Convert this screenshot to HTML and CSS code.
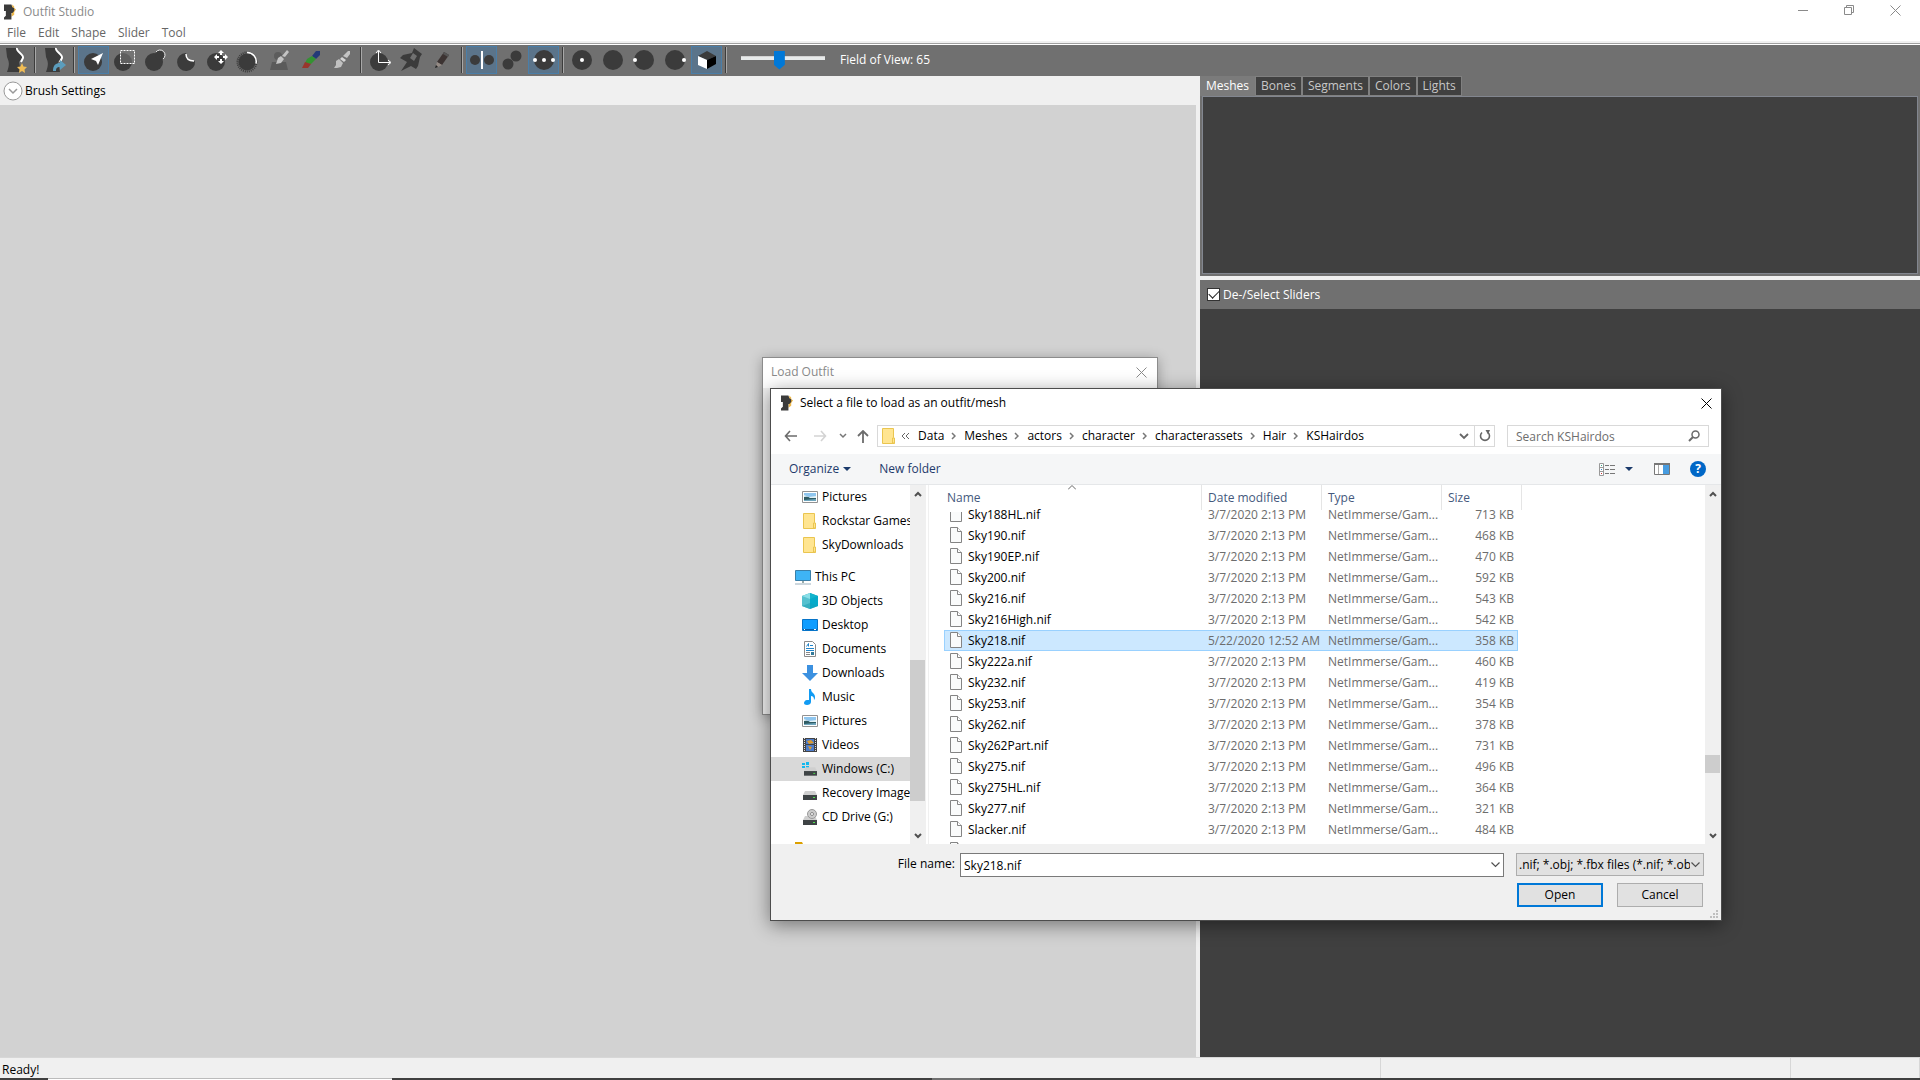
FILE: index.html
```html
<!DOCTYPE html>
<html lang="en">
<head>
<meta charset="utf-8">
<title>Outfit Studio</title>
<link rel="stylesheet" href="styles.css">
</head>
<body>
<svg class="defs" aria-hidden="true">
  <symbol id="app" viewBox="0 0 14 16"><path d="M9 0l2 2v2l2 1-2 3v3l-3 2z" fill="#efb94b"/><path d="M0 0h8l1 3 2 1v3L9 9H8v7H0v-2l2-2V7H0z" fill="#3b3b3b"/></symbol>
  <symbol id="torso" viewBox="0 0 22 26"><path d="M1 1h12c-1 4 5 6 4 10l-3 4 2 10H2c3-8 2-10 0-15z" fill="#3b3b3b"/><path d="M12 1c-1 4 7 6 6 10l-2 4" fill="none" stroke="#fff" stroke-width="2"/></symbol>
  <symbol id="ball" viewBox="0 0 20 20"><circle cx="10" cy="10" r="10" fill="#3b3b3b"/></symbol>
  <symbol id="page" viewBox="0 0 12 16"><path d="M.5 .5h7l4 4v11H.5z" fill="#fafbfb" stroke="#848484"/><path d="M7.500 .5v4h4" fill="#fff" stroke="#848484"/></symbol>
  <symbol id="page-end" viewBox="0 6 12 10"><path d="M.5 .5h11v15H.5z" fill="#fafbfb" stroke="#848484"/></symbol>
  <symbol id="folder" viewBox="0 0 14 16"><path d="M.5 .5h11v9l1 1v5H.5z" fill="#ffe591" stroke="#eac54f"/><path d="M10.500 15v-5h2v5z" fill="#ffe591" stroke="#eac54f"/></symbol>
  <symbol id="picture" viewBox="0 0 16 12"><path d="M.5 .5h15v11H.5z" fill="#fff" stroke="#929292"/><path d="M2 2h12v8H2z" fill="#8fc6ef"/><path d="M2 4l5 2 7-1v3H2z" fill="#e2f1f6"/><path d="M2 6q4-1 6 1l6 0v3H2z" fill="#2f5c64"/><path d="M2 9l12-1v2H2z" fill="#6fa7be"/></symbol>
  <symbol id="chev-up" viewBox="0 0 8 6"><path d="M1 5l3-3 3 3" fill="none" stroke="#505050" stroke-width="2"/></symbol>
  <symbol id="chev-down" viewBox="0 0 8 6"><path d="M1 1l3 3 3-3" fill="none" stroke="#505050" stroke-width="2"/></symbol>
  <symbol id="combo" viewBox="0 0 9 6"><path d="M.5 .5l4 4 4-4" fill="none" stroke="#505050" stroke-width="1.200"/></symbol>
  <symbol id="crumb" viewBox="0 0 5 8"><path d="M1 1l3 3-3 3" fill="none" stroke="#777" stroke-width="1.500"/></symbol>
  <symbol id="close" viewBox="0 0 11 11"><path d="M.5 .5l10 10M10.500 .5l-10 10" fill="none" stroke="currentColor"/></symbol>
  <symbol id="drive" viewBox="0 0 14 9"><path d="M2 0h10l2 4H0z" fill="#cfcfcf"/><path d="M0 4h14v5H0z" fill="#3e4345"/><path d="M10 6h2v1h-2z" fill="#4de34d"/></symbol>
</svg>

<div class="app">
  <header class="titlebar">
    <svg class="app-icon"><use href="#app"/></svg>
    <h1 class="app-title">Outfit Studio</h1>
    <div class="win-controls">
      <button aria-label="Minimize"><svg width="11" height="11"><path d="M0 5.500h10" stroke="#8a8a8a"/></svg></button>
      <button aria-label="Restore"><svg width="11" height="11"><path d="M.5 2.500h7v7h-7zM2.500 2.500v-2h7v7h-2" fill="none" stroke="#8a8a8a"/></svg></button>
      <button aria-label="Close"><svg width="11" height="11"><use href="#close"/></svg></button>
    </div>
  </header>
  <nav class="menubar">
    <button>File</button><button>Edit</button><button>Shape</button><button>Slider</button><button>Tool</button>
  </nav>

  <div class="toolbar" role="toolbar">
    <button class="tool" aria-label="New project"><svg viewBox="0 0 31 28"><use href="#torso" x="5" y="1" width="22" height="26"/><path d="M22 17l1.500 3.500 3.500 .5-2.500 2.500.5 3.500-3-2-3 2 .5-3.500L17 21l3.500-.5z" fill="#f0bc55"/></svg></button>
    <span class="sep"></span>
    <button class="tool" aria-label="Load project"><svg viewBox="0 0 31 28"><use href="#torso" x="5" y="1" width="22" height="26"/><path d="M14 25c0-6 3-8 7-8v-3l6 5-6 5v-3c-3 0-4 1-4 4z" fill="#5b9dbd"/></svg></button>
    <span class="sep"></span>
    <button class="tool on" aria-label="Select"><svg viewBox="0 0 31 28"><circle cx="15" cy="16" r="9" fill="#3b3b3b"/><path d="M25 7L13 13l5 2 2 4z" fill="#fff"/></svg></button>
    <button class="tool" aria-label="Mask"><svg viewBox="0 0 31 28"><circle cx="14" cy="16" r="9" fill="#3b3b3b"/><path d="M11.500 4.500h14v13h-14z" fill="#777" fill-opacity=".6" stroke="#fff" stroke-dasharray="2 1"/></svg></button>
    <button class="tool" aria-label="Inflate"><svg viewBox="0 0 31 28"><circle cx="14" cy="16" r="9" fill="#3b3b3b"/><circle cx="20" cy="9" r="5" fill="#3b3b3b"/><path d="M16 6a5 5 0 1 1 7 7" fill="none" stroke="#eee"/></svg></button>
    <button class="tool" aria-label="Deflate"><svg viewBox="0 0 31 28"><path d="M15 7a9 9 0 1 0 9 8c-5 1-9-2-9-8z" fill="#3b3b3b"/><path d="M15 8c0 5 3 7 8 7" fill="none" stroke="#fff" stroke-width="1.500"/></svg></button>
    <button class="tool" aria-label="Move"><svg viewBox="0 0 31 28"><circle cx="14" cy="16" r="9" fill="#3b3b3b"/><path d="M19 4l3 3h-2v2h-2V7h-2zM19 18l3-3h-2v-2h-2v2h-2zM12 11l3-3v2h2v2h-2v2zM26 11l-3-3v2h-2v2h2v2z" fill="#fff"/></svg></button>
    <button class="tool" aria-label="Smooth"><svg viewBox="0 0 31 28"><circle cx="14" cy="16" r="8.500" fill="#3b3b3b"/><circle cx="14" cy="16" r="9.500" fill="none" stroke="#3b3b3b" stroke-width="2" stroke-dasharray="1 1"/><path d="M14 6.500a9 9 0 0 1 9 11" fill="none" stroke="#fff" stroke-width="1.500"/></svg></button>
    <button class="tool" aria-label="Mask brush"><svg viewBox="0 0 31 28"><circle cx="14" cy="10" r="4" fill="#5c5c5c"/><path d="M8 16h14l2 8H6z" fill="#5a5a5a"/><path d="M23 4l2 2-4 5-3-1zM17 10l3 3-3 4-5 1 2-6z" fill="#c4c4c4"/></svg></button>
    <button class="tool" aria-label="Weight brush"><svg viewBox="0 0 31 28"><path d="M21 5h4v4l-4 4-4-3z" fill="#243a78"/><path d="M17 10l4 3-5 5-6-1 2-4z" fill="#349232"/><path d="M7 22l3-6 6 2-3 4z" fill="#98362c"/></svg></button>
    <button class="tool" aria-label="Color brush"><svg viewBox="0 0 31 28"><path d="M22 5h2v3l-3 4-4-2z" fill="#c4c4c4"/><path d="M16 11l4 3-2 2-4-3z" fill="#d6d6d6"/><path d="M13 13l4 4-2 4-4 1H8l2-3v-4z" fill="#c0c0c0"/></svg></button>
    <span class="sep"></span>
    <button class="tool" aria-label="Transform"><svg viewBox="0 0 31 28"><circle cx="14" cy="16" r="9" fill="#3b3b3b"/><path d="M13.500 5v11.500H25M11 7l2.500-3L16 7M23 14l3 2.500-3 2.500" fill="none" stroke="#fff"/></svg></button>
    <button class="tool" aria-label="Pin"><svg viewBox="0 0 31 28"><path d="M18 2l8 6-2 3-2 9-2 3-5-3-10 5 6-9-7-4 3-3 9-2z" fill="#3b3b3b"/><path d="M17 7l4 3-3 5-4-3z" fill="#707070"/></svg></button>
    <button class="tool" aria-label="Vertex edit"><svg viewBox="0 0 31 28"><path d="M17 6l5 3-7 10-5-3z" fill="#3c3332"/><path d="M17 6l5 3-1 2-5-3z" fill="#555"/><path d="M10 16l5 3-4 2-2-1z" fill="#948a84"/><path d="M9 19l2 2-3 1z" fill="#222"/></svg></button>
    <span class="sep"></span>
    <button class="tool on" aria-label="Mirror"><svg viewBox="0 0 31 28"><circle cx="9" cy="14" r="5" fill="#3b3b3b"/><circle cx="23" cy="14" r="5" fill="#3b3b3b"/><path d="M15 5h2v18h-2z" fill="#fff"/></svg></button>
    <button class="tool" aria-label="Connected"><svg viewBox="0 0 31 28"><circle cx="11" cy="18" r="5.500" fill="#3b3b3b"/><circle cx="19" cy="10" r="5.500" fill="#3b3b3b"/></svg></button>
    <button class="tool on" aria-label="Global brush collision"><svg viewBox="0 0 31 28"><use href="#ball" x="6" y="4" width="20" height="20"/><circle cx="7" cy="14" r="2" fill="#fff"/><circle cx="16" cy="14" r="2" fill="#fff"/><circle cx="25" cy="14" r="2" fill="#fff"/></svg></button>
    <span class="sep"></span>
    <button class="tool" aria-label="Front view"><svg viewBox="0 0 31 28"><use href="#ball" x="5" y="4" width="20" height="20"/><circle cx="15" cy="14" r="2" fill="#fff"/></svg></button>
    <button class="tool" aria-label="Back view"><svg viewBox="0 0 31 28"><use href="#ball" x="5" y="4" width="20" height="20"/></svg></button>
    <button class="tool" aria-label="Left view"><svg viewBox="0 0 31 28"><use href="#ball" x="5" y="4" width="20" height="20"/><circle cx="6" cy="14" r="2" fill="#fff"/></svg></button>
    <button class="tool" aria-label="Right view"><svg viewBox="0 0 31 28"><use href="#ball" x="5" y="4" width="20" height="20"/><circle cx="24" cy="14" r="2" fill="#fff"/></svg></button>
    <button class="tool on" aria-label="Perspective"><svg viewBox="0 0 31 28"><path d="M16 5l9 5-9 4-9-4z" fill="#3b3b3b"/><path d="M7 10l9 4v9l-9-4z" fill="#fff"/><path d="M25 10l-9 4v9l9-5z" fill="#000"/></svg></button>
    <span class="sep"></span>
    <input class="fov" id="fov" type="range" min="0" max="100" value="45">
    <label class="fov-label" for="fov">Field of View: 65</label>
  </div>

  <div class="workspace">
    <section class="viewport">
      <button class="brush-settings">
        <svg width="20" height="20"><circle cx="10" cy="10" r="9" fill="#fff" stroke="#999"/><path d="M6 8l4 4 4-4" fill="none" stroke="#999" stroke-width="1.500"/></svg>
        Brush Settings
      </button>
      <div class="canvas"></div>
    </section>
    <aside class="side">
      <div class="mesh-panel">
        <div class="tabs" role="tablist">
          <button class="tab current" role="tab">Meshes</button><button class="tab" role="tab">Bones</button><button class="tab" role="tab">Segments</button><button class="tab" role="tab">Colors</button><button class="tab" role="tab">Lights</button>
        </div>
        <div class="mesh-tree"></div>
      </div>
      <div class="slider-panel">
        <label class="slider-head"><input type="checkbox" checked>De-/Select Sliders</label>
      </div>
    </aside>
  </div>

  <footer class="statusbar"><span class="status-main">Ready!</span><span class="status-mid"></span><span class="status-end"></span></footer>
  <div class="taskbar-edge"><span class="edge-search"></span><span class="edge-active"></span></div>
</div>

<section class="load-window">
  <header class="load-title"><h2>Load Outfit</h2><button aria-label="Close"><svg width="11" height="11"><use href="#close"/></svg></button></header>
</section>

<section class="dialog" role="dialog" aria-labelledby="dlg-title">
  <header class="dlg-title">
    <svg class="app-icon"><use href="#app"/></svg>
    <h2 id="dlg-title">Select a file to load as an outfit/mesh</h2>
    <button aria-label="Close"><svg width="11" height="11"><use href="#close"/></svg></button>
  </header>
  <div class="nav-row">
    <div class="arrows">
      <button aria-label="Back"><svg width="14" height="12"><path d="M6 1L1.500 6 6 11M1.500 6H13" fill="none" stroke="#6c6c6c" stroke-width="1.600"/></svg></button>
      <button aria-label="Forward"><svg width="14" height="12"><path d="M8 1l4.500 5L8 11M12.500 6H1" fill="none" stroke="#d3d3d3" stroke-width="1.600"/></svg></button>
      <button aria-label="Recent"><svg width="8" height="6"><path d="M1 1l3 3 3-3" fill="none" stroke="#777" stroke-width="1.500"/></svg></button>
      <button aria-label="Up"><svg width="12" height="13"><path d="M1 6l5-5 5 5M6 1v12" fill="none" stroke="#6c6c6c" stroke-width="1.800"/></svg></button>
    </div>
    <div class="address">
      <svg class="addr-folder" width="14" height="16"><use href="#folder"/></svg>
      <svg class="addr-more" width="9" height="8"><path d="M4 1L1 4l3 3M8 1L5 4l3 3" fill="none" stroke="#666"/></svg>
      <a href="#">Data</a><svg class="crumb"><use href="#crumb"/></svg>
      <a href="#">Meshes</a><svg class="crumb"><use href="#crumb"/></svg>
      <a href="#">actors</a><svg class="crumb"><use href="#crumb"/></svg>
      <a href="#">character</a><svg class="crumb"><use href="#crumb"/></svg>
      <a href="#">characterassets</a><svg class="crumb"><use href="#crumb"/></svg>
      <a href="#">Hair</a><svg class="crumb"><use href="#crumb"/></svg>
      <a href="#">KSHairdos</a>
      <button class="addr-drop" aria-label="Previous locations"><svg width="10" height="7"><path d="M1 1l4 4 4-4" fill="none" stroke="#666" stroke-width="1.800"/></svg></button>
      <button class="addr-refresh" aria-label="Refresh"><svg width="12" height="12"><path d="M3 2.500a4.500 4.500 0 1 0 6 0" fill="none" stroke="#666" stroke-width="1.600"/><path d="M6.500 0H11l-2 4.500z" fill="#666"/></svg></button>
    </div>
    <div class="search">
      <input type="search" placeholder="Search KSHairdos" aria-label="Search KSHairdos">
      <svg width="12" height="12"><circle cx="7.500" cy="4.500" r="3.500" fill="none" stroke="#6b6b6b" stroke-width="1.500"/><path d="M5 7L1 11" stroke="#6b6b6b" stroke-width="2"/></svg>
    </div>
  </div>
  <div class="command-bar">
    <button class="organize">Organize <svg width="8" height="4"><path d="M0 0h8L4 4z" fill="#1b3a6b"/></svg></button>
    <button>New folder</button>
    <div class="view-tools">
      <button aria-label="View"><svg width="16" height="13"><path d="M.5 .5h4v12h-4zM.5 4.500h4M.5 8.500h4" fill="#fff" stroke="#999"/><path d="M6 2.500h4m1 0h5M6 6.500h4m1 0h5M6 10.500h4m1 0h5" stroke="#777"/><path d="M2 2h1v1H2z" fill="#3a8"/><path d="M2 6h1v1H2z" fill="#38c"/><path d="M2 10h1v1H2z" fill="#c33"/></svg></button>
      <button class="view-drop" aria-label="View options"><svg width="8" height="4"><path d="M0 0h8L4 4z" fill="#1b3a6b"/></svg></button>
      <button class="preview" aria-label="Preview pane"><svg width="16" height="12"><path d="M.5 .5h15v11H.5z" fill="#fff" stroke="#777"/><path d="M0 0h16v2H0z" fill="#777"/><path d="M4.500 2v9" stroke="#aaa"/><path d="M9 2h6v9H9z" fill="#479ce0"/></svg></button>
      <button class="help" aria-label="Help">?</button>
    </div>
  </div>

  <div class="browser">
    <nav class="tree">
      <a href="#"><svg width="16" height="12"><use href="#picture"/></svg>Pictures</a>
      <a href="#"><svg width="16" height="16"><use href="#folder" x="1" width="14" height="16"/></svg>Rockstar Games</a>
      <a href="#"><svg width="16" height="16"><use href="#folder" x="1" width="14" height="16"/></svg>SkyDownloads</a>
      <a href="#" class="root"><svg width="16" height="15"><path d="M.5 .5h15v10H.5z" fill="#3eb4f5" stroke="#3a7fa8"/><path d="M7 11h2v2H7z" fill="#9aa"/><path d="M0 14h16" stroke="#9bb0bd" stroke-width="1"/></svg>This PC</a>
      <a href="#"><svg width="16" height="16"><path d="M0 3l8-3 8 3v10l-8 3-8-3z" fill="#27a3b4"/><path d="M0 3l8-3v10l-8 3z" fill="#8adfe8"/><path d="M8 0l8 3v10l-8-3z" fill="#12b4cd"/><path d="M0 3l8 3v10l-8-3z" fill="#3fb3c4" fill-opacity=".7"/><path d="M8 6l8-3v10l-8 3z" fill="#00a5c8" fill-opacity=".7"/></svg>3D Objects</a>
      <a href="#"><svg width="16" height="12"><path d="M.5 .5h15v11H.5z" fill="#0f9dff" stroke="#0774c8"/><path d="M1 10.500h14" stroke="#0a5fa8"/><path d="M2 10h1v1H2zM12 10h2v1h-2z" fill="#fff"/></svg>Desktop</a>
      <a href="#"><svg width="16" height="16"><path d="M2.500 .5h8l3 3v12h-11z" fill="#fff" stroke="#8a8a8a"/><path d="M4 7.500h8M8 4.500h3M4 9.500h8" stroke="#2185cb"/><path d="M4.500 5.500l2-3v3" stroke="#2185cb" fill="none"/><path d="M4 11.500h4M4 13.500h4" stroke="#888"/><path d="M9 11h3v3H9z" fill="#357b9a"/></svg>Documents</a>
      <a href="#"><svg width="16" height="16"><path d="M5 0h6v8h5l-8 8-8-8h5z" fill="#3c91e0"/></svg>Downloads</a>
      <a href="#"><svg width="16" height="16"><path d="M7 0h2c0 4 4 4 4 8 0 1 0 2-1 3 0-3-1-4-3-4v6c0 2-2 3-4 3s-3-1-3-2 1-3 3-3h2z" fill="#119bf3"/></svg>Music</a>
      <a href="#"><svg width="16" height="12"><use href="#picture"/></svg>Pictures</a>
      <a href="#"><svg width="16" height="16"><path d="M1 1h14v14H1z" fill="#444"/><path d="M4 2h8v5H4zM4 8h8v6H4z" fill="#4d7cc9"/><path d="M5 4l4-1 3 3-5 1zM6 9l4 1-2 3z" fill="#dd9b2c"/><path d="M2.500 1v14M13.500 1v14" stroke="#ddd" stroke-dasharray="1 1"/></svg>Videos</a>
      <a href="#" class="picked"><svg width="16" height="14"><path d="M0 1h3v2H0zM4 0h3v3H4zM0 4h3v2H0zM4 4h3v3H4z" fill="#14b8ee"/><use href="#drive" x="2" y="5" width="13" height="9"/></svg>Windows (C:)</a>
      <a href="#"><svg width="16" height="14"><use href="#drive" x="1" y="5" width="14" height="9"/></svg>Recovery Image</a>
      <a href="#"><svg width="16" height="16"><use href="#drive" x="1" y="7" width="14" height="9"/><circle cx="10" cy="5" r="4.500" fill="#ccc" stroke="#999"/><circle cx="10" cy="5" r="1.500" fill="#fff" stroke="#888"/></svg>CD Drive (G:)</a>
      <a href="#" class="root" aria-label="Libraries"><svg width="16" height="14"><path d="M0 0h7l1 2h8v12H0z" fill="#dca000"/></svg></a>
    </nav>
    <div class="scroll tree-scroll"><svg><use href="#chev-up"/></svg><span class="gap-a"></span><span class="thumb"></span><span class="gap-b"></span><svg><use href="#chev-down"/></svg></div>
    <div class="files">
      <svg class="sort" width="8" height="5"><path d="M0 4.500l4-4 4 4" fill="none" stroke="#666"/></svg>
      <table>
        <colgroup><col class="c-name"><col class="c-date"><col class="c-type"><col class="c-size"><col class="c-edge"></colgroup>
        <thead><tr><th>Name</th><th>Date modified</th><th>Type</th><th colspan="2">Size</th></tr></thead>
        <tbody>
          <tr class="cut"><td><div><svg><use href="#page-end"/></svg>Sky188HL.nif</div></td><td><div>3/7/2020 2:13 PM</div></td><td><div>NetImmerse/Gam...</div></td><td><div>713 KB</div></td></tr>
          <tr><td><svg><use href="#page"/></svg>Sky190.nif</td><td>3/7/2020 2:13 PM</td><td>NetImmerse/Gam...</td><td>468 KB</td></tr>
          <tr><td><svg><use href="#page"/></svg>Sky190EP.nif</td><td>3/7/2020 2:13 PM</td><td>NetImmerse/Gam...</td><td>470 KB</td></tr>
          <tr><td><svg><use href="#page"/></svg>Sky200.nif</td><td>3/7/2020 2:13 PM</td><td>NetImmerse/Gam...</td><td>592 KB</td></tr>
          <tr><td><svg><use href="#page"/></svg>Sky216.nif</td><td>3/7/2020 2:13 PM</td><td>NetImmerse/Gam...</td><td>543 KB</td></tr>
          <tr><td><svg><use href="#page"/></svg>Sky216High.nif</td><td>3/7/2020 2:13 PM</td><td>NetImmerse/Gam...</td><td>542 KB</td></tr>
          <tr class="picked"><td><svg><use href="#page"/></svg>Sky218.nif</td><td>5/22/2020 12:52 AM</td><td>NetImmerse/Gam...</td><td>358 KB</td></tr>
          <tr><td><svg><use href="#page"/></svg>Sky222a.nif</td><td>3/7/2020 2:13 PM</td><td>NetImmerse/Gam...</td><td>460 KB</td></tr>
          <tr><td><svg><use href="#page"/></svg>Sky232.nif</td><td>3/7/2020 2:13 PM</td><td>NetImmerse/Gam...</td><td>419 KB</td></tr>
          <tr><td><svg><use href="#page"/></svg>Sky253.nif</td><td>3/7/2020 2:13 PM</td><td>NetImmerse/Gam...</td><td>354 KB</td></tr>
          <tr><td><svg><use href="#page"/></svg>Sky262.nif</td><td>3/7/2020 2:13 PM</td><td>NetImmerse/Gam...</td><td>378 KB</td></tr>
          <tr><td><svg><use href="#page"/></svg>Sky262Part.nif</td><td>3/7/2020 2:13 PM</td><td>NetImmerse/Gam...</td><td>731 KB</td></tr>
          <tr><td><svg><use href="#page"/></svg>Sky275.nif</td><td>3/7/2020 2:13 PM</td><td>NetImmerse/Gam...</td><td>496 KB</td></tr>
          <tr><td><svg><use href="#page"/></svg>Sky275HL.nif</td><td>3/7/2020 2:13 PM</td><td>NetImmerse/Gam...</td><td>364 KB</td></tr>
          <tr><td><svg><use href="#page"/></svg>Sky277.nif</td><td>3/7/2020 2:13 PM</td><td>NetImmerse/Gam...</td><td>321 KB</td></tr>
          <tr><td><svg><use href="#page"/></svg>Slacker.nif</td><td>3/7/2020 2:13 PM</td><td>NetImmerse/Gam...</td><td>484 KB</td></tr>
          <tr><td><svg><use href="#page"/></svg></td><td></td><td></td><td></td></tr>
        </tbody>
      </table>
    </div>
    <div class="scroll file-scroll"><svg><use href="#chev-up"/></svg><span class="gap-a"></span><span class="thumb"></span><span class="gap-b"></span><svg><use href="#chev-down"/></svg></div>
  </div>

  <form class="dlg-foot">
    <label for="fname">File name:</label>
    <div class="combo"><input id="fname" type="text" value="Sky218.nif"><svg width="9" height="6"><use href="#combo"/></svg></div>
    <div class="combo type"><select aria-label="File type"><option>.nif; *.obj; *.fbx files (*.nif; *.obj;</option></select><svg width="9" height="6"><use href="#combo"/></svg></div>
    <div class="actions"><button type="button" class="primary">Open</button><button type="button">Cancel</button></div>
    <svg class="grip" width="8" height="8"><path d="M6 0h2v2H6zM3 3h2v2H3zM6 3h2v2H6zM0 6h2v2H0zM3 6h2v2H3zM6 6h2v2H6z" fill="#bfbfbf"/></svg>
  </form>
</section>
</body>
</html>
```
FILE: styles.css
```css
* { box-sizing: border-box; }
body { margin: 0; font: 12px/16px "Open Sans", "Noto Sans", sans-serif; color: #000; overflow: hidden; }
button, input, select { font: inherit; color: inherit; margin: 0; }
button { border: 0; background: none; padding: 0; }
a { color: inherit; text-decoration: none; }
h1, h2 { margin: 0; font-size: 12px; font-weight: 400; }
svg { flex: none; display: block; }
.defs { position: absolute; width: 0; height: 0; }

.app { display: flex; flex-direction: column; height: 100vh; background: #f0f0f0; }
.titlebar { display: flex; align-items: center; height: 23px; padding: 0 2px 0 4px; background: #fff; color: #8a8a8a; }
.app-icon { width: 13px; height: 16px; }
.app-title { margin-left: 6px; }
.win-controls { margin-left: auto; display: flex; align-self: flex-start; }
.win-controls button { width: 46px; height: 21px; display: grid; place-items: center; }
.menubar { display: flex; height: 18px; padding-left: 7px; gap: 12px; background: #fff; color: #666; }
.menubar button { height: 18px; line-height: 20px; }

.toolbar { display: flex; align-items: center; height: 33px; margin-top: 2px; flex: none; background: #707070; border-top: 1px solid #a0a0a0; box-shadow: inset 0 1px #fff; }
.tool { width: 31px; height: 28px; border: 1px solid transparent; }
.tool svg { width: 31px; height: 28px; margin: -1px; }
.tool.on { background: #5b748a; border-color: #4a7ea8; }
.sep { width: 8px; height: 26px; background: linear-gradient(90deg, #3c3c3c 50%, #a8a8a8 50%) 3px 0 / 2px 100% no-repeat; }
.fov { appearance: none; width: 84px; height: 20px; margin: 0 0 0 11px; background: linear-gradient(#d2d2d2 1px, #e7eaea 1px) 0 6px / 100% 4px no-repeat; }
.fov::-webkit-slider-thumb { appearance: none; width: 11px; height: 19px; background: #0078d7; clip-path: polygon(0 0, 100% 0, 100% 75%, 50% 100%, 0 75%); }
.fov-label { margin-left: 15px; color: #fff; }

.workspace { flex: 1; min-height: 0; display: grid; grid-template-columns: 5fr 3fr; border-bottom: 1px solid #d7d7d7; }
.viewport { display: flex; flex-direction: column; padding-right: 4px; }
.brush-settings { display: flex; align-items: center; gap: 2px; height: 29px; padding-left: 3px; flex: none; }
.canvas { flex: 1; background: #d2d2d2; }
.side { display: flex; flex-direction: column; gap: 4px; }
.mesh-panel { display: flex; flex-direction: column; height: 200px; padding: 0 2px 2px; background: #707070; }
.tabs { display: flex; height: 20px; margin-left: -2px; }
.tab { padding: 0 5px; color: #c8c8c8; background: #404040; border: 1px solid #808080; line-height: 18px; }
.tab.current { background: #7b7b7b; border-color: #7b7b7b; color: #fff; }
.mesh-tree { flex: 1; background: #404040; border: 1px solid #82868f; }
.slider-panel { flex: 1; background: #404040; }
.slider-head { display: flex; align-items: center; gap: 3px; height: 29px; padding-left: 7px; background: #707070; color: #fff; }
.slider-head input { appearance: none; width: 13px; height: 13px; background: #fff; border: 1px solid #333; display: grid; place-items: center; }
.slider-head input::after { content: ""; width: 9px; height: 5px; margin-top: -3px; border: solid #222; border-width: 0 0 1px 1px; transform: rotate(-45deg); }

.statusbar { display: flex; height: 20px; flex: none; line-height: 24px; }
.status-main { flex: 1382; padding-left: 2px; }
.status-mid { flex: 410; border-left: 1px solid #d7d7d7; }
.status-end { flex: 128; border: solid #d7d7d7; border-width: 0 1px; }
.taskbar-edge { display: flex; height: 2px; flex: none; background: #404040; }
.edge-search { width: 344px; margin-left: 48px; background: #fff; border-top: 1px solid #bbb; }
.edge-active { width: 48px; margin-left: 540px; background: #707070; }

.load-window { position: absolute; left: 762px; top: 357px; width: 396px; height: 358px; background: #f0f0f0; border: 1px solid #8c8c8c; box-shadow: 0 2px 12px rgba(0,0,0,.3); }
.load-title { display: flex; align-items: center; justify-content: space-between; height: 30px; padding: 0 10px 2px 8px; background: #fff; color: #8a8a8a; }

.dialog { position: absolute; left: 770px; top: 388px; width: 952px; background: #fff; border: 1px solid #4c4c4c; box-shadow: 0 4px 18px rgba(0,0,0,.45); }
.dlg-title { display: flex; align-items: center; height: 30px; padding: 0 9px 2px 10px; }
.dlg-title h2 { flex: 1; margin-left: 6px; }
.nav-row { display: flex; align-items: center; height: 35px; padding: 0 12px 1px 13px; }
.arrows { display: flex; align-items: center; width: 93px; gap: 15px; }
.arrows button:nth-child(3) { margin-left: -3px; }
.arrows button:nth-child(4) { margin-left: -5px; }
.address { flex: 1; display: flex; align-items: center; height: 22px; border: 1px solid #d9d9d9; padding-left: 4px; }
.addr-more { margin: 0 8px 0 5px; }
.crumb { width: 5px; height: 8px; margin: 0 8px 0 7px; }
.addr-drop { margin-left: auto; width: 20px; height: 20px; display: grid; place-items: center; }
.addr-refresh { width: 20px; height: 20px; border-left: 1px solid #d9d9d9; display: grid; place-items: center; }
.search { display: flex; align-items: center; width: 202px; height: 22px; margin-left: 12px; padding: 0 8px; border: 1px solid #d9d9d9; }
.search input { flex: 1; min-width: 0; height: 20px; padding: 0; border: 0; outline: 0; background: none; }
.search input::placeholder { color: #6d6d6d; }
.command-bar { display: flex; align-items: center; height: 31px; padding: 0 15px 0 18px; gap: 28px; background: #f5f6f7; border-bottom: 1px solid #e5e7e9; color: #1e3a6b; }
.organize { display: flex; align-items: center; gap: 4px; }
.view-tools { margin-left: auto; display: flex; align-items: center; }
.view-drop { margin-left: 10px; }
.preview { margin-left: 21px; }
.help { width: 16px; height: 16px; margin-left: 20px; border-radius: 50%; background: #0067c7; color: #fff; font-weight: 700; line-height: 16px; }

.browser { display: flex; height: 359px; overflow: hidden; }
.tree { width: 139px; display: flex; flex-direction: column; overflow: hidden; }
.tree a { display: flex; align-items: center; gap: 4px; height: 24px; padding-left: 31px; flex: none; white-space: nowrap; }
.tree .root { margin-top: 8px; padding-left: 24px; }
.tree .picked { background: #d9d9d9; }
.scroll { display: flex; flex-direction: column; align-items: center; background: #f0f0f0; padding: 6px 0 5px; flex: none; }
.scroll svg { width: 8px; height: 6px; }
.scroll .thumb { width: 100%; background: #cdcdcd; }
.tree-scroll { width: 16px; padding-right: 1px; }
.tree-scroll .gap-a { flex: 163; }
.tree-scroll .thumb { flex: 141; }
.tree-scroll .gap-b { flex: 32; }
.file-scroll { width: 16px; padding-right: 1px; }
.file-scroll .gap-a { flex: 258; }
.file-scroll .thumb { flex: 18; }
.file-scroll .gap-b { flex: 60; }
.files { position: relative; flex: 1; margin-left: 2px; padding-left: 15px; border-left: 1px solid #f0f0f0; overflow: hidden; }
.sort { position: absolute; left: 139px; top: 0; }
.files table { width: 578px; table-layout: fixed; border-collapse: separate; border-spacing: 0; color: #6d6d6d; }
.c-name { width: 258px; }
.c-date, .c-type { width: 120px; }
.c-size { width: 76px; }
.c-edge { width: 4px; }
.files th { height: 25px; padding: 0 0 0 6px; text-align: left; font-weight: 400; color: #44597d; border-right: 1px solid #e5e5e5; }
.files th:first-child { padding-left: 3px; }
.files td { height: 21px; padding: 0 0 0 6px; line-height: 19px; white-space: nowrap; border: solid transparent; border-width: 1px 0; }
.files td:nth-child(4) { text-align: right; padding: 0 4px 0 0; }
.files td:first-child { color: #000; padding-left: 6px; }
.files td svg { display: inline-block; width: 12px; height: 16px; margin: 1px 6px 0 0; vertical-align: top; }
.files .cut td { height: 15px; border: 0; }
.files .cut div { height: 15px; display: flex; align-items: flex-end; line-height: 20px; }
.files .cut svg { height: 10px; margin: 0 6px 3px 0; }
.files .cut td:nth-child(4) div { justify-content: flex-end; }
.files .picked td { background: #cce8ff; border-color: #99d1ff; }
.files .picked td:first-child { border-left: 1px solid #99d1ff; padding-left: 5px; }
.files .picked td:nth-child(4) { border-right: 1px solid #99d1ff; padding-right: 3px; }

.dlg-foot { position: relative; display: grid; grid-template-columns: 184px 1fr 188px; column-gap: 12px; row-gap: 6px; align-content: start; height: 76px; padding: 9px 17px 0 0; background: #f0f0f0; }
.dlg-foot > label { text-align: right; line-height: 22px; }
.combo { position: relative; height: 24px; margin-left: -7px; }
.combo svg { position: absolute; right: 4px; top: 9px; }
.combo input { width: 100%; height: 24px; padding: 0 20px 0 3px; border: 1px solid #7a7a7a; background: #fff; outline: 0; }
.type { margin-left: 0; }
.type select { appearance: none; width: 100%; height: 23px; padding: 0 13px 0 2px; border: 1px solid #adadad; border-radius: 0; background: #e1e1e1; }
.actions { grid-column: 3; display: flex; gap: 14px; padding-left: 1px; }
.actions button { width: 86px; height: 24px; border: 1px solid #adadad; background: #e1e1e1; }
.actions .primary { border: 2px solid #0078d7; }
.grip { position: absolute; right: 3px; bottom: 2px; }
```
